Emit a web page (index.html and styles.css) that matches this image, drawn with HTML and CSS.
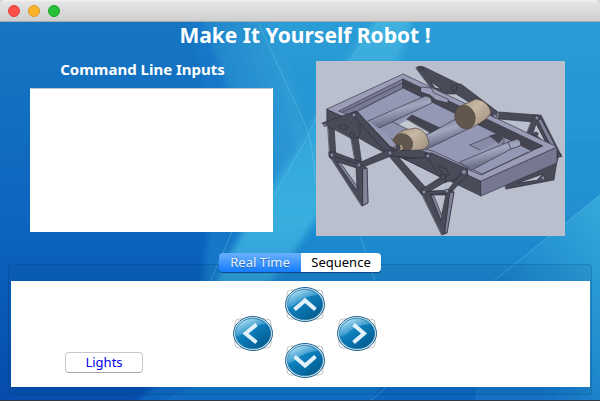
FILE: index.html
```html
<!DOCTYPE html>
<html lang="en">
<head>
<meta charset="utf-8">
<title>Make It Yourself Robot !</title>
<link rel="stylesheet" href="styles.css">
</head>
<body>
<div class="window">
  <header class="titlebar">
    <button class="light close" aria-label="Close"></button>
    <button class="light minimize" aria-label="Minimize"></button>
    <button class="light maximize" aria-label="Zoom"></button>
  </header>
  <main class="content">
    <svg class="wallpaper" viewBox="0 22 600 378" preserveAspectRatio="none" aria-hidden="true">
      <defs>
        <linearGradient id="base" x1="0" y1="0" x2="0" y2="1"><stop offset="0" stop-color="#1676c2"/><stop offset=".55" stop-color="#0c64bf"/><stop offset="1" stop-color="#064cac"/></linearGradient>
        <linearGradient id="sky" x1="0" y1="0" x2="0" y2="1"><stop offset="0" stop-color="#2b9dd6"/><stop offset=".5" stop-color="#2190d2"/><stop offset=".75" stop-color="#167bc8"/><stop offset="1" stop-color="#0c62bd"/></linearGradient>
        <linearGradient id="beam" x1="0" y1="0" x2="0" y2="1"><stop offset="0" stop-color="#42b3df"/><stop offset=".35" stop-color="#31a3d9"/><stop offset=".75" stop-color="#3aafdf"/><stop offset="1" stop-color="#2d9ad5"/></linearGradient>
        <linearGradient id="fan" gradientUnits="userSpaceOnUse" x1="205" y1="60" x2="290" y2="40"><stop offset="0" stop-color="#2083cb"/><stop offset="1" stop-color="#309fd6"/></linearGradient>
        <linearGradient id="corner" x1="1" y1="0" x2=".3" y2=".7"><stop offset="0" stop-color="#38aedb"/><stop offset=".6" stop-color="#2391d0"/><stop offset="1" stop-color="#1674c5"/></linearGradient>
        <filter id="soft" x="-10%" y="-10%" width="120%" height="120%"><feGaussianBlur stdDeviation="3"/></filter>
      </defs>
      <path fill="url(#base)" d="M0 22H600V400H0z"/>
      <path fill="url(#sky)" d="M258 15H610V410H125Q205 350 224 280Q265 205 307 140z" filter="url(#soft)"/>
      <path fill="#1977c8" d="M188 15H260L307 140L226 284H202L212 200Q205 75 188 15z" filter="url(#soft)"/>
      <path fill="url(#fan)" d="M200 15H270L312 140L274 200Q235 110 200 15z" filter="url(#soft)"/>
      <path fill="url(#beam)" d="M380 15H413Q392 90 345 163Q318 225 266 288H214Q242 225 270 190L307 134Q331 77 380 15z" filter="url(#soft)"/>
      <path fill="url(#corner)" d="M600 195L490 284L475 400H600z" opacity=".85"/>
      <path fill="#1a7bca" opacity=".4" d="M165 400L210 375H388L372 400z"/>
      <path fill="none" stroke="#7bd4ee" opacity=".35" d="M258 22Q288 88 306 126Q314 150 315 182M380 22Q330 78 307 138L274 196M232 232L210 282M359 232L376 284M600 195L490 284M386 387L372 400"/>
    </svg>
    <h1 class="title">Make It Yourself Robot !</h1>
    <div class="top">
      <section class="commands">
        <label class="caption" for="cmd">Command Line Inputs</label>
        <textarea class="input" id="cmd"></textarea>
      </section>
      <svg class="robot" viewBox="316 61 249 175" role="img" aria-label="Robot model" stroke-linejoin="round" stroke-linecap="round">
        <defs>
          <linearGradient id="tube" x1="0" y1="0" x2=".45" y2="1"><stop offset=".25" stop-color="#7d819a"/><stop offset=".5" stop-color="#a3a7c0"/><stop offset=".8" stop-color="#70748b"/></linearGradient>
          <linearGradient id="motor" x1="0" y1="0" x2="1" y2=".9"><stop offset="0" stop-color="#a1907d"/><stop offset=".45" stop-color="#c6b8a5"/><stop offset="1" stop-color="#9b8c7a"/></linearGradient>
        </defs>
        <path fill="#b9bfcc" d="M316 61h249v175H316z"/>
        <g fill="#4a4b58" stroke="#2b2c37" stroke-width=".6">
          <path fill-rule="evenodd" d="M416 68Q418 65 424 67L459 84L462 89L455 94H446L432 89zM431 82L435 88L441 89z"/>
          <path d="M457 84L461 84L498 112L494 118L453 92z"/>
          <path d="M499 112L538 115L540 120L534 122L498 119z"/>
          <path fill-rule="evenodd" d="M534 115L541 115L562 157L551 153L526 136zM536 124L533 133L546 143z"/>
          <path fill="#80839a" d="M538 120L541 119L557 149L552 148z"/>
          <path fill-rule="evenodd" d="M505 184L539 168L560 153L557 161L554 180L506 189zM518 183L543 174L537 180z"/>
        </g>
        <g stroke="#383946" stroke-width=".7">
          <path fill="#4b4c59" d="M327 109L481 181V196L327 122z"/>
          <path fill="#757890" d="M481 181L557 147V163L481 196z"/>
          <path fill="#9a9cb8" d="M327 109L403 74L557 147L481 181z"/>
          <path fill="#777a92" d="M339 111L403 79V88L350 115z"/>
          <path fill="#444550" d="M403 79L543 146L531 151L403 88z"/>
          <path fill="#9598b4" d="M350 115L403 88L532 151L482 174L433 151L397 145z"/>
          <path fill="#9a9cb8" d="M421 87L431 88L434 93L448 99V103L436 100L430 95L421 92z"/>
          <path fill="none" d="M343 112L403 83L414 88"/>
          <path fill="#c4c9d1" stroke="none" d="M398 125L409 119L431 131L418 137z"/>
          <path fill="#42434e" d="M407 119L412 115L440 128L431 133z"/>
          <path fill="#8f92ad" d="M373 131L391 121L415 133L399 142z"/>
          <path fill="url(#tube)" d="M368 121L425 96Q432 96 432 103L377 129Q369 129 368 121z"/>
          <path fill="url(#tube)" d="M425 136L461 116L472 127L427 149z"/>
          <path fill="#898ca7" d="M470 145L496 134L504 137V143L483 151z"/>
          <path fill="#9598b4" stroke="none" d="M479 151L496 143L511 145L488 156z"/>
          <path fill="#454652" d="M490 136L497 134L503 138L499 143z"/>
          <path fill="url(#tube)" d="M460 162L508 142L517 139Q522 141 520 146L511 149L472 170z"/>
          <path fill="none" d="M465 168L481 175L528 152M511 149L508 142"/>
        </g>
        <g stroke="#51483f" stroke-width=".7">
          <path fill="url(#motor)" d="M456 113Q456 108 465 104L476 99Q488 101 491 112Q490 117 480 123L469 129z"/>
          <ellipse cx="465" cy="117" rx="10" ry="12" transform="rotate(-20 465 117)" fill="#61574f"/>
          <path fill="url(#motor)" d="M393 141Q394 135 404 130L416 128Q428 131 429 144Q428 148 415 153L398 152z"/>
          <ellipse cx="403" cy="143" rx="10" ry="9" transform="rotate(35 403 143)" fill="#61574f"/>
        </g>
        <g fill="#4a4b58" stroke="#2b2c37" stroke-width=".6">
          <path d="M328 126H334L336 157H330zM351 137H358L362 165H356z"/>
          <path d="M357 112L392 148L430 157V163L390 156L357 137z"/>
          <path fill="#9598b4" stroke="none" d="M365 119L386 133L400 150L390 146z"/>
          <path fill-rule="evenodd" d="M322 123L356 111L360 115V136L353 139zM339 126Q344 123 348 127Q347 131 341 129z"/>
          <path d="M352 114L358 112L392 150L428 190L422 195L388 155z"/>
          <path d="M329 152H334L361 162L388 150L391 156L361 168L330 158z"/>
          <path fill-rule="evenodd" d="M329 155L361 165L367 168L368 203L362 206zM337 162L357 189L356 168z"/>
          <path fill="#808399" d="M337 162L342 165L357 186V190L355 188zM363 169L367 168L368 203L363 205z"/>
          <path d="M389 151L421 150L430 154V159L392 156z"/>
          <path d="M405 159L430 157L442 178L434 174z"/>
          <path fill-rule="evenodd" d="M425 153H432L468 169L467 175L444 183L438 174zM438 166L442 174L449 175L446 169z"/>
          <path d="M422 189L441 177L447 181L430 191H447L464 170L468 174L449 195L424 195z"/>
          <path fill-rule="evenodd" d="M421 192L449 190L454 192L447 233L442 235zM431 195L441 218L446 194z"/>
          <path fill="#808399" d="M431 195L434 196L442 216L441 220zM450 193L454 192L447 233L445 233z"/>
        </g>
        <g fill="#858aa2" stroke="#30313e" stroke-width=".6">
          <circle cx="325" cy="125" r="1.500"/><circle cx="354" cy="115" r="2"/><circle cx="332" cy="155" r="2"/><circle cx="359" cy="165" r="2"/><circle cx="390" cy="153" r="2"/><circle cx="428" cy="156" r="2"/><circle cx="464" cy="172" r="2.500"/><circle cx="424" cy="192" r="2"/><circle cx="447" cy="191" r="2"/><circle cx="495" cy="116" r="2"/><circle cx="537" cy="118" r="2"/><circle cx="543" cy="178" r="2"/>
          <g fill="#4a4b58"><circle cx="352" cy="135" r="2.500"/><circle cx="443" cy="177" r="3"/><circle cx="421" cy="69" r="2"/><circle cx="454" cy="88" r="3"/><circle cx="536" cy="134" r="2"/><circle cx="559" cy="155" r="2"/></g>
          <path fill="#aa967c" d="M394 147L402 144L404 149L398 152z"/>
          <ellipse cx="398" cy="148" rx="2" ry="3" fill="#4a4b58"/>
        </g>
      </svg>
    </div>
    <section class="tabs">
      <div class="segments" role="tablist">
        <button class="segment active" id="tab-real" role="tab" aria-selected="true" aria-controls="panel">Real Time</button>
        <button class="segment" role="tab" aria-selected="false">Sequence</button>
      </div>
      <div class="frame">
        <div class="panel" id="panel" role="tabpanel" aria-labelledby="tab-real">
          <button class="lights">Lights</button>
          <div class="pad">
            <button class="arrow up" aria-label="Forward"><svg viewBox="0 0 40 35"><use href="#disc"/><path class="chevron" d="M9.500 22.500L20 13.500L30.500 22.500"/></svg></button>
            <button class="arrow left" aria-label="Left"><svg viewBox="0 0 40 35"><use href="#disc"/><path class="chevron" d="M23.500 8.500L12.500 17.500L23.500 26.500"/></svg></button>
            <button class="arrow right" aria-label="Right"><svg viewBox="0 0 40 35"><use href="#disc"/><path class="chevron" d="M16.500 8.500L27 17.500L16.500 26.500"/></svg></button>
            <button class="arrow down" aria-label="Backward"><svg viewBox="0 0 40 35"><use href="#disc"/><path class="chevron" d="M9.500 13.500L20 22.500L30.500 13.500"/></svg></button>
          </div>
        </div>
      </div>
    </section>
  </main>
</div>
<svg class="symbols" aria-hidden="true">
  <defs>
    <linearGradient id="ball" x1="0" y1="0" x2=".8" y2="1"><stop offset="0" stop-color="#53b2e2"/><stop offset=".45" stop-color="#0d80bd"/><stop offset="1" stop-color="#00598b"/></linearGradient>
    <linearGradient id="gloss" x1="0" y1="0" x2=".7" y2="1"><stop offset="0" stop-color="#e2f5ff" stop-opacity=".95"/><stop offset="1" stop-color="#43a5d5" stop-opacity=".1"/></linearGradient>
    <g id="disc">
      <rect x="2" y="3" width="36" height="29" rx="4" fill="#fff" stroke="#c4c4c4"/>
      <ellipse cx="20" cy="17.500" rx="19.500" ry="17" fill="#d7eefa" stroke="#1b608c"/>
      <ellipse cx="20" cy="17.500" rx="17.800" ry="15.300" fill="url(#ball)" stroke="#28739d" stroke-width=".6"/>
      <path fill="url(#gloss)" d="M3 20C2 9 10 3 20 3Q28 3 33 8Q19 9 12 16Q8 20 3 20z"/>
    </g>
  </defs>
</svg>
</body>
</html>
```
FILE: styles.css
```css
* { box-sizing: border-box; }

body {
  margin: 0;
  background: #d5d5d5;
  font-family: "Noto Sans", "Open Sans", sans-serif;
}

button {
  margin: 0;
  padding: 0;
  border: 0;
  font: inherit;
}

.symbols { position: absolute; width: 0; height: 0; }

.window {
  display: flex;
  flex-direction: column;
  min-height: 100vh;
  border-bottom: 1px solid #303942;
}

.titlebar {
  display: flex;
  align-items: center;
  gap: 8px;
  height: 22px;
  padding: 0 8px;
  border-radius: 5px 5px 0 0;
  border-bottom: 1px solid #a9a9a9;
  background: linear-gradient(#f4f4f4, #e4e4e4 10%, #cfcfcf);
}

.light {
  width: 12px;
  height: 12px;
  border-radius: 50%;
}

.close { background: #fe5049; border: 1px solid #e0423f; }
.minimize { background: #feb429; border: 1px solid #dd9a24; }
.maximize { background: #25c239; border: 1px solid #1ba42d; }

.content {
  position: relative;
  z-index: 0;
  display: flex;
  flex: 1;
  flex-direction: column;
}

.wallpaper {
  position: absolute;
  inset: 0;
  z-index: -1;
  width: 100%;
  height: 100%;
}

.title {
  margin: 0;
  padding-left: 10px;
  color: #fff;
  font: bold 21px/26px "Noto Sans", sans-serif;
  text-align: center;
}

.top {
  display: grid;
  grid-template-columns: 243fr 249fr;
  gap: 43px;
  padding: 13px 35px 0 30px;
}

.commands {
  display: flex;
  flex-direction: column;
}

.caption {
  padding: 0 18px 0 0;
  color: #fff;
  font: bold 15px/16px "Noto Sans", sans-serif;
  text-align: center;
}

.input {
  flex: 1;
  width: 100%;
  margin: 11px 0 4px;
  border: 1px solid #fff;
  border-top-color: #b9c6d4;
  background: #fff;
  outline: 0;
  resize: none;
}

.robot { display: block; width: 100%; }

.tabs {
  display: flex;
  flex: 1;
  flex-direction: column;
  padding: 17px 8px 5px;
}

.segments {
  z-index: 1;
  display: flex;
  align-self: center;
  border-radius: 4px;
  box-shadow: 0 1px 1px #0a4684;
  font-size: 13px;
  line-height: 19px;
}

.segment {
  width: 80px;
  border-radius: 0 4px 4px 0;
  background: #fff;
  color: #000;
}

.segment.active {
  width: 82px;
  border-radius: 4px 0 0 4px;
  background: linear-gradient(#69b0fb, #157dfe);
  color: #e6f2ff;
  text-shadow: 0 1px 1px #2267b8;
}

.frame {
  display: flex;
  flex: 1;
  margin-top: -8px;
  padding: 16px 1px 7px 2px;
  border: 1px solid rgba(0, 50, 100, .18);
  border-radius: 4px;
  background: rgba(0, 70, 110, .09);
}

.panel {
  display: grid;
  flex: 1;
  grid-template-columns: 222px 1fr;
  padding: 6px 0 9px;
  background: #fff;
}

.lights {
  align-self: end;
  width: 78px;
  margin: 0 0 5px 54px;
  border: 1px solid #c9c9c9;
  border-bottom-color: #a9a9a9;
  border-radius: 4px;
  background: #fff;
  color: #0000f5;
  font-size: 13px;
  line-height: 19px;
}

.pad {
  display: grid;
  grid-template-columns: repeat(3, 40px);
  grid-template-rows: 29px 27px 35px;
  column-gap: 12px;
}

.arrow {
  height: 35px;
  border-radius: 50%;
  background: none;
}

.arrow svg { display: block; width: 100%; height: 100%; }
.up { grid-area: 1 / 2; }
.left { grid-area: 2 / 1; }
.right { grid-area: 2 / 3; }
.down { grid-area: 3 / 2; }

.chevron {
  fill: none;
  stroke: #e0f1fb;
  stroke-width: 4;
}
```
